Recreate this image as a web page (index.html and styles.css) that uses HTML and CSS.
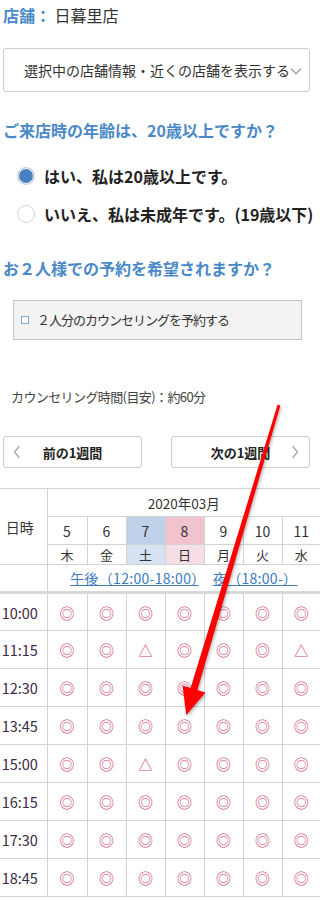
FILE: index.html
```html
<!DOCTYPE html>
<html lang="ja">
<head>
<meta charset="utf-8">
<link rel="stylesheet" href="styles.css">
</head>
<body>
<div class="top">
  <div class="store"><span class="store-label">店舗：</span> 日暮里店</div>
  <div class="select"><span class="select-text">選択中の店舗情報・近くの店舗を表示する</span><svg class="sel-chev" width="12" height="8" viewBox="0 0 12 8"><polyline points="1,1.5 6,6.5 11,1.5" fill="none" stroke="#aaa" stroke-width="1.6"/></svg></div>
  <h2 class="q q1">ご来店時の年齢は、20歳以上ですか？</h2>
  <div class="radios">
    <label class="radio"><span class="dot on"></span>はい、私は20歳以上です。</label>
    <label class="radio"><span class="dot"></span>いいえ、私は未成年です。(19歳以下)</label>
  </div>
  <h2 class="q q2">お２人様での予約を希望されますか？</h2>
  <div class="pair"><span class="cb"></span><span class="pair-text">２人分のカウンセリングを予約する</span></div>
  <p class="note">カウンセリング時間(目安)：約60分</p>
  <div class="weeknav">
    <a class="wbtn"><svg class="chev" width="8" height="14" viewBox="0 0 8 14"><polyline points="6.5,1 1.5,7 6.5,13" fill="none" stroke="#b0b0b0" stroke-width="1.6"/></svg><span class="wtext">前の1週間</span><span></span></a>
    <a class="wbtn"><span></span><span class="wtext">次の1週間</span><svg class="chev chev-r" width="8" height="14" viewBox="0 0 8 14"><polyline points="1.5,1 6.5,7 1.5,13" fill="none" stroke="#b0b0b0" stroke-width="1.6"/></svg></a>
  </div>
</div>
<table class="cal">
  <colgroup>
    <col class="c-time"><col class="c-d2"><col class="c-d"><col class="c-d"><col class="c-d"><col class="c-d"><col class="c-d"><col class="c-dl">
  </colgroup>
  <tr class="r-month"><th class="hd-time" rowspan="3">日時</th><th class="month" colspan="7">2020年03月</th></tr>
  <tr class="r-date"><td>5</td><td>6</td><td class="sat">7</td><td class="sun">8</td><td>9</td><td>10</td><td>11</td></tr>
  <tr class="r-wd"><td>木</td><td>金</td><td class="sat-l">土</td><td class="sun-l">日</td><td>月</td><td>火</td><td>水</td></tr>
  <tr class="r-period"><td></td><td colspan="7" class="period"><a class="plink">午後（12:00-18:00）</a>　<a class="plink">夜（18:00-）</a></td></tr>
  <tr class="slot"><th>10:00</th><td>◎</td><td>◎</td><td>◎</td><td>◎</td><td>◎</td><td>◎</td><td>◎</td></tr>
  <tr class="slot"><th>11:15</th><td>◎</td><td>◎</td><td class="tri">△</td><td>◎</td><td>◎</td><td>◎</td><td class="tri">△</td></tr>
  <tr class="slot"><th>12:30</th><td>◎</td><td>◎</td><td>◎</td><td>◎</td><td>◎</td><td>◎</td><td>◎</td></tr>
  <tr class="slot"><th>13:45</th><td>◎</td><td>◎</td><td>◎</td><td>◎</td><td>◎</td><td>◎</td><td>◎</td></tr>
  <tr class="slot"><th>15:00</th><td>◎</td><td>◎</td><td class="tri">△</td><td>◎</td><td>◎</td><td>◎</td><td>◎</td></tr>
  <tr class="slot"><th>16:15</th><td>◎</td><td>◎</td><td>◎</td><td>◎</td><td>◎</td><td>◎</td><td>◎</td></tr>
  <tr class="slot"><th>17:30</th><td>◎</td><td>◎</td><td>◎</td><td>◎</td><td>◎</td><td>◎</td><td>◎</td></tr>
  <tr class="slot"><th>18:45</th><td>◎</td><td>◎</td><td>◎</td><td>◎</td><td>◎</td><td>◎</td><td>◎</td></tr>
</table>
<svg class="arrow" width="320" height="900" viewBox="0 0 320 900">
  <polygon points="277.6,404.6 280.4,405.4 197.4,690 205.5,692.4 186.3,714.9 182.5,685.6 190.6,688" fill="#ff0000"/>
</svg>
</body>
</html>
```
FILE: styles.css
```css
html, body {
  margin: 0;
  padding: 0;
}
body {
  width: 320px;
  height: 900px;
  overflow: hidden;
  position: relative;
  font-family: "Noto Sans CJK JP", "Noto Sans", sans-serif;
  color: #333;
  background: #fff;
}
.top {
  padding: 3px 10px 0 3px;
}
.store {
  font-size: 16px;
  line-height: 24px;
  color: #333;
}
.store-label {
  color: #4a89c8;
  font-weight: bold;
}
.select {
  margin-top: 21px;
  height: 44px;
  box-sizing: border-box;
  border: 1px solid #ccc;
  border-radius: 3px;
  display: flex;
  align-items: center;
  padding-left: 20px;
  white-space: nowrap;
}
.select-text {
  font-size: 14px;
  line-height: 20px;
  color: #333;
}
.sel-chev {
  margin-top: 2px;
}
.q {
  margin: 0;
  font-size: 16px;
  line-height: 24px;
  font-weight: bold;
  color: #4a89c8;
  white-space: nowrap;
}
.q1 {
  margin-top: 26px;
}
.radios {
  margin-top: 22px;
}
.radio {
  display: flex;
  align-items: center;
  height: 24px;
  margin-bottom: 14px;
  font-size: 16px;
  font-weight: bold;
  color: #222;
  white-space: nowrap;
}
.dot {
  width: 16px;
  height: 16px;
  margin-left: 14px;
  margin-right: 9px;
  border: 1px solid #d5d5d5;
  border-radius: 50%;
  background: #fff;
  flex: none;
}
.dot.on {
  background: #4a80c0;
  box-shadow: inset 0 0 0 1px #fff;
}
.q2 {
  margin-top: 30px;
}
.pair {
  margin: 20px 8px 0 10px;
  height: 40px;
  box-sizing: border-box;
  border: 1px solid #c4c4c4;
  background: #f3f3f3;
  display: flex;
  align-items: center;
  padding-left: 7px;
}
.cb {
  width: 6px;
  height: 6px;
  border: 1px solid #7ea8d8;
  background: #fff;
  margin-right: 8px;
  flex: none;
}
.pair-text {
  font-size: 13px;
  line-height: 20px;
  letter-spacing: -1px;
  color: #333;
}
.note {
  margin: 47px 0 0 8px;
  font-size: 13px;
  line-height: 20px;
  letter-spacing: -0.6px;
  color: #444;
}
.weeknav {
  margin-top: 29px;
  display: flex;
  justify-content: space-between;
}
.wbtn {
  width: 139px;
  height: 32px;
  box-sizing: border-box;
  border: 1px solid #ccc;
  border-radius: 3px;
  display: grid;
  grid-template-columns: 20px 1fr 20px;
  align-items: center;
  font-size: 13px;
  font-weight: bold;
  color: #222;
}
.wtext {
  text-align: center;
}
.chev {
  margin-left: 9px;
}
.chev-r {
  margin-left: 2px;
}
.cal {
  margin-top: 20px;
  width: 320px;
  border-collapse: collapse;
  table-layout: fixed;
}
.c-time { width: 47px; }
.c-d2 { width: 40px; }
.c-d { width: 39px; }
.c-dl { width: 38px; }
.cal th, .cal td {
  border: 1px solid #d3d3d3;
  padding: 0;
  text-align: center;
  font-weight: normal;
  color: #333;
}
.cal tr > :first-child {
  border-left: none;
}
.cal tr > :last-child {
  border-right: none;
}
.hd-time {
  font-size: 14px;
  padding-right: 7px !important;
}
.month {
  font-size: 13.5px;
}
.r-month { height: 28px; }
.r-date { height: 28px; }
.r-date td { font-size: 14px; }
.r-wd { height: 20px; }
.r-wd td { font-size: 13px; line-height: 18px; }
.r-period { height: 28px; }
.r-period td { border-bottom: 3px solid #d9d9d9; }
.sat { background: #bfd1e8; }
.sun { background: #f1c4cd; }
.sat-l { background: #d5e2f2; }
.sun-l { background: #f6dee6; }
.period {
  font-size: 14px;
  letter-spacing: 0.3px;
  white-space: nowrap;
}
.plink {
  color: #3d7bc0;
  text-decoration: underline;
}
.slot { height: 38px; }
.slot th {
  font-size: 14.5px;
  padding-right: 7px !important;
  color: #3a2a48;
}
.slot td {
  font-size: 15px;
  color: #cf4570;
}
.slot td.tri {
  font-size: 14px;
}
.arrow {
  position: absolute;
  left: 0;
  top: 0;
  pointer-events: none;
  filter: drop-shadow(1px 2px 1.5px rgba(0,0,0,0.3));
}
```
